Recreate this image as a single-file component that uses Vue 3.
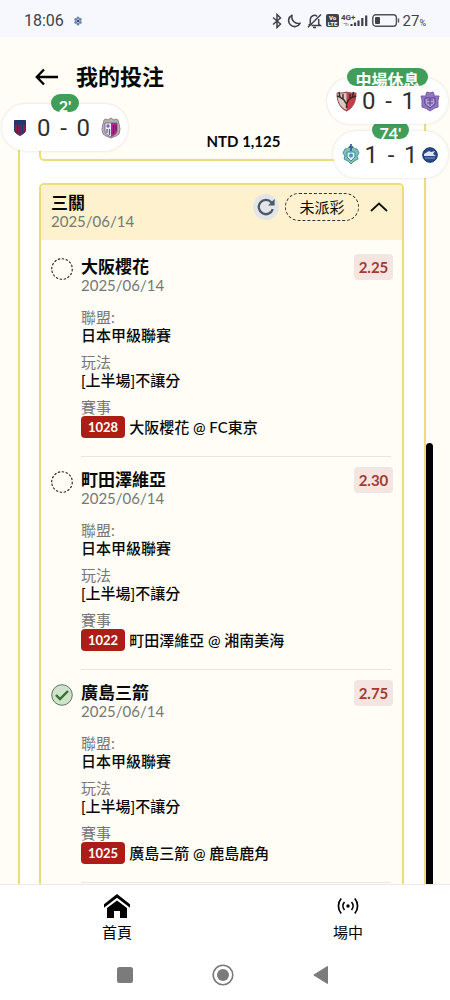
<script setup>
import { ref } from 'vue'

const open = ref(true)

const legs = [
  { pick: '大阪櫻花', date: '2025/06/14', odds: '2.25', code: '1028', match: '大阪櫻花 @ FC東京', won: false },
  { pick: '町田澤維亞', date: '2025/06/14', odds: '2.30', code: '1022', match: '町田澤維亞 @ 湘南美海', won: false },
  { pick: '廣島三箭', date: '2025/06/14', odds: '2.75', code: '1025', match: '廣島三箭 @ 鹿島鹿角', won: true },
]
</script>

<template>
  <div class="phone">
    <div class="status">
      <span class="clock">18:06</span>
      <svg class="flower" width="8" height="10" viewBox="0 0 8 10">
        <g fill="#6f87ad"><circle cx="4" cy="2" r="1.5" /><circle cx="4" cy="8" r="1.5" /><circle cx="1.7" cy="3.5" r="1.4" /><circle cx="6.3" cy="3.5" r="1.4" /><circle cx="1.7" cy="6.5" r="1.4" /><circle cx="6.3" cy="6.5" r="1.4" /></g>
        <circle cx="4" cy="5" r="1.3" fill="#34507f" />
      </svg>
      <div class="status-icons">
        <svg width="10" height="16" viewBox="0 0 10 16" fill="none" stroke="#40424a" stroke-width="1.5"><path d="M1 4.5 8.5 11 5 14.5V1.5L8.5 5 1 11.5" /></svg>
        <svg class="moon" width="14" height="14" viewBox="0 0 14 14" fill="none" stroke="#40424a" stroke-width="1.6" stroke-linejoin="round"><path d="M5 1.2A6 6 0 1 0 13 9.3 6.6 6.6 0 0 1 5 1.2Z" /></svg>
        <svg class="bell" width="15" height="16" viewBox="0 0 15 16" fill="none" stroke="#40424a" stroke-width="1.5"><path d="M3.3 10.8V6.5a4.2 4.2 0 0 1 6.8-3.2M11.7 6v5l1.6 1.5H4.5M1 14.3 14 1.5M6 14.6h3" /><path d="M1.6 12.4 3.3 11" /></svg>
        <svg class="volte" width="13" height="13" viewBox="0 0 13 13"><rect width="13" height="13" rx="2" fill="#40424a" /><text x="6.5" y="6" class="volte-text">Vo</text><text x="6.5" y="11.6" class="volte-text">LTE</text></svg>
        <svg class="signal" width="27" height="15" viewBox="0 0 27 15">
          <text x="0" y="6.5" class="net-text">4G+</text>
          <path d="M2.5 10.5h4M4 12h4" stroke="#9a9ca4" stroke-width="1" />
          <path d="M10.5 11v2M14 9.5V13M17.5 7.5V13M21.3 5V13M25.2 2.5V13" stroke="#40424a" stroke-width="2.2" />
        </svg>
        <svg class="battery" width="28" height="13" viewBox="0 0 28 13"><rect x=".8" y=".8" width="23.6" height="11.4" rx="3" fill="none" stroke="#50525a" stroke-width="1.4" /><rect x="3" y="3" width="5" height="7" rx="1" fill="#40424a" /><path d="M26.5 4.5v4" stroke="#50525a" stroke-width="1.4" /></svg>
        <span class="level">27<small>%</small></span>
      </div>
    </div>

    <header class="top">
      <button class="icon-btn" aria-label="返回">
        <svg width="24" height="18" viewBox="0 0 24 18" fill="none" stroke="#000" stroke-width="2.4"><path d="M23 9H2M9 1.500 1.800 9 9 16.500" /></svg>
      </button>
      <h1>我的投注</h1>
    </header>

    <main class="content">
      <div class="panel">
        <section class="card previous"><p class="amount">NTD 1,125</p></section>

        <section class="card">
          <div class="card-head">
            <div>
              <h2>三關</h2>
              <p class="date">2025/06/14</p>
            </div>
            <div class="tools">
              <button class="reload" aria-label="重新整理">
                <svg width="18" height="18" viewBox="0 0 18 18" fill="none" stroke="#4e5968" stroke-width="2.3"><path d="M15.8 11.2A7.2 7.2 0 1 1 14.5 4.4" /><path d="M17.6 1v6.6H11Z" fill="#4e5968" stroke="none" /></svg>
              </button>
              <span class="state">未派彩</span>
              <button class="icon-btn toggle" aria-label="收合" :aria-expanded="open" @click="open = !open">
                <svg width="18" height="10" viewBox="0 0 18 10" fill="none" stroke="#111" stroke-width="1.8"><path d="m1 9 8-7.500L17 9" /></svg>
              </button>
            </div>
          </div>

          <div v-if="open" class="legs">
            <article v-for="leg in legs" :key="leg.code" class="leg">
              <svg class="mark" width="22" height="22" viewBox="0 0 22 22" fill="none">
                <template v-if="leg.won">
                  <circle cx="11" cy="11" r="10.3" fill="#cfe3cc" stroke="#5f755f" stroke-width="1" />
                  <path d="m5 11 4 4 8-8" stroke="#35702f" stroke-width="2.4" />
                </template>
                <circle v-else cx="11" cy="11" r="10.3" stroke="#222" stroke-width="1.1" stroke-dasharray="2.4 1.6" />
              </svg>
              <div class="leg-body">
                <div class="leg-head">
                  <div class="leg-title">
                    <h3>{{ leg.pick }}</h3>
                    <p class="date">{{ leg.date }}</p>
                  </div>
                  <span class="odds">{{ leg.odds }}</span>
                </div>
                <dl>
                  <dt>聯盟:</dt>
                  <dd>日本甲級聯賽</dd>
                  <dt>玩法</dt>
                  <dd>[上半場]不讓分</dd>
                  <dt>賽事</dt>
                  <dd class="match"><span class="code">{{ leg.code }}</span>{{ leg.match }}</dd>
                </dl>
              </div>
            </article>
          </div>
        </section>
      </div>
      <div class="thumb"></div>
    </main>

    <nav class="tabs">
      <a href="#home">
        <svg width="28" height="26" viewBox="0 0 28 26"><path d="M14 1 1 11.3v3.500L14 4.800l13 10v-3.500Z" fill="#000" /><path d="M14 7.500 4 15v10h7v-7h6v7h7V15Z" fill="#000" /></svg>
        <span>首頁</span>
      </a>
      <a href="#live">
        <svg width="22" height="26" viewBox="0 0 22 26" fill="none" stroke="#000" stroke-width="1.7"><circle cx="11" cy="13" r="1.7" fill="#000" stroke="none" /><path d="M7.500 9a6 6 0 0 0 0 8M14.500 9a6 6 0 0 1 0 8M4.200 5.500a11.500 11.500 0 0 0 0 15M17.800 5.500a11.500 11.500 0 0 1 0 15" /></svg>
        <span>場中</span>
      </a>
    </nav>

    <div class="system">
      <button class="icon-btn" aria-label="最近"><svg width="16" height="16" viewBox="0 0 16 16"><rect width="16" height="16" rx="2.5" fill="#7b7b7b" /></svg></button>
      <button class="icon-btn" aria-label="主畫面"><svg width="22" height="22" viewBox="0 0 22 22"><circle cx="11" cy="11" r="9.8" fill="none" stroke="#7b7b7b" stroke-width="1.6" /><circle cx="11" cy="11" r="6" fill="#7b7b7b" /></svg></button>
      <button class="icon-btn" aria-label="上一頁"><svg width="16" height="18" viewBox="0 0 16 18"><path d="M14.5.5v17L.8 9Z" fill="#7b7b7b" stroke="#7b7b7b" stroke-linejoin="round" /></svg></button>
    </div>

    <div class="float kobe">
      <span class="tag-row"><span class="tag">2'</span></span>
      <svg width="12" height="16" viewBox="0 0 12 16"><path d="M.5.5h11v9.500c0 2.500-2.500 4-5.500 5.500C3 14 .5 12.500.5 10Z" fill="#8b1c48" stroke="#26306f" /><path d="M1 1h10v4H1Z" fill="#28346f" /><path d="M3.500 5v8M6 5v9M8.500 5v8" stroke="#25346f" stroke-width="1" /></svg>
      <b class="score"><i>0</i><i>-</i><i>0</i></b>
      <svg width="20" height="22" viewBox="0 0 20 22"><path d="m3 3 2-1 2 1 3-2 3 2 2-1 2 1 1 4 1 5-1 5-3 2-5 2-5-2-3-2-1-5 1-5Z" fill="#b9b1a9" stroke="#93858c" /><path d="M4 6h12v8c0 3-3 4-6 6-3-2-6-3-6-6Z" fill="#f3edf6" stroke="#574d85" stroke-width=".7" /><path d="M10 6h6v8c0 3-3 4-6 6Z" fill="#b1278c" /><path d="M6 12v4M8.500 12v6" stroke="#5767b0" stroke-width="1.400" /><path d="M12.500 8v9M15 8v6" stroke="#51286f" stroke-width="1.200" /><circle cx="7" cy="9" r="1.700" fill="#7767b4" /></svg>
    </div>

    <div class="float hiroshima">
      <span class="tag-row"><span class="tag">中場休息</span></span>
      <svg width="21" height="22" viewBox="0 0 21 22"><path d="M1 3c3 0 6 0 9.500-1C14 3 17 3 20 3c0 9-3 15-9.500 18C4 18 1 12 1 3Z" fill="#c93b45" stroke="#8a5552" /><path d="M1.500 3.500c3 0 6 0 9-.500v17C4 17 1.500 11 1.500 3.500Z" fill="#d5cbc3" /><path d="m3 2 1 5 4 3 2.500 4 2-4 4-3 1-5M4 7 1 6m6 3 0-5m7 5 0-5m3 3 3-1M10.500 13v5" stroke="#3b2526" stroke-width="1.400" fill="none" /></svg>
      <b class="score"><i>0</i><i>-</i><i>1</i></b>
      <svg width="20" height="21" viewBox="0 0 20 21"><path d="m6 3 1-2 3 1 3-1 1 2v2h5l-1 4v7l-3 1-2 1-3 2-3-2-2-1-3-1V9L1 5h5Z" fill="#9276c3" stroke="#765ba5" /><path d="M5 7h10v6l-5 4-5-4Z" fill="#b6a1d8" stroke="#563e84" /><path d="M7 9h6M10 7v8M7 12h6" stroke="#5c438f" /></svg>
    </div>

    <div class="float shonan">
      <span class="tag-row"><span class="tag">74'</span></span>
      <svg width="18" height="21" viewBox="0 0 18 21"><path d="M3 5c2 0 3-1 4-2h4c1 1 2 2 4 2l2 4-2 3 1 3-4 2-3 3-3-3-4-2 1-3-2-3Z" fill="#83c1b4" stroke="#469492" /><path d="M9 0v7M7 3h4" stroke="#3466a0" stroke-width="1.800" /><path d="M5 8h8v5l-4 4-4-4Z" fill="#dceff1" stroke="#34889e" /><circle cx="9" cy="11.500" r="2" fill="#4b91be" /></svg>
      <b class="score"><i>1</i><i>-</i><i>1</i></b>
      <svg width="16" height="16" viewBox="0 0 16 16"><circle cx="8" cy="8" r="7.300" fill="#29488d" stroke="#172f62" /><path d="M2 7 7 4l2 1 4-1-2 3 3 2H2Z" fill="#dde6ef" /><path d="M3 11h10" stroke="#6b91bf" stroke-width="1.200" /></svg>
    </div>
  </div>
</template>

<style>
body { margin: 0; }
</style>

<style scoped>
* { box-sizing: border-box; }
.phone {
  position: relative;
  display: flex;
  flex-direction: column;
  height: 100vh;
  overflow: hidden;
  background: #fffdf5;
  color: #080808;
  font-family: Lato, "Noto Sans CJK TC", sans-serif;
  font-size: 15px;
}
h1, h2, h3, p, dl, dd { margin: 0; }
svg { display: block; flex: none; }
button { padding: 0; border: 0; background: none; color: inherit; font: inherit; cursor: pointer; }
.icon-btn { display: flex; align-items: center; justify-content: center; }

.status {
  display: flex;
  align-items: center;
  flex: none;
  height: 37px;
  padding: 4px 24px 0;
  background: #f6f8fd;
  color: #40424a;
  font-family: Roboto, sans-serif;
}
.clock { font-size: 16px; }
.flower { margin-left: 10px; }
.status-icons { display: flex; align-items: center; margin-left: auto; }
.moon { margin-left: 5px; }
.bell { margin-left: 6px; }
.volte { margin-left: 4px; }
.signal { margin-left: 2px; }
.battery { margin-left: 4px; }
.level { margin-left: 3px; font-size: 15px; }
.level small { font-size: 9px; }
.volte-text { fill: #fff; font: bold 6px Roboto, sans-serif; text-anchor: middle; }
.net-text { fill: #40424a; font: bold 8px Roboto, sans-serif; }

.top { display: flex; align-items: center; flex: none; gap: 17px; height: 80px; padding-left: 35px; }
h1 { font-size: 22px; font-weight: 700; line-height: 32px; }

.content { position: relative; flex: 1; min-height: 0; overflow: hidden; padding: 0 24px 0 18px; }
.panel { padding: 0 20px 0 19px; border: solid #ecdc7a; border-width: 0 2px; background: #fff; }
.card { margin-bottom: 22px; overflow: hidden; border: 2px solid #ecdc7a; border-radius: 5px; background: #fffdf5; }
.previous { padding: 14px 0 8px; border-top: 0; border-radius: 0 0 5px 5px; }
.amount { padding-left: 44px; font-weight: 700; line-height: 20px; text-align: center; }
.card-head { display: flex; justify-content: space-between; padding: 8px 9px 10px 10px; background: #fdf2cd; }
h2, h3 { font-size: 17px; font-weight: 700; line-height: 20px; }
.date { color: #777; font-size: 15px; line-height: 17px; }
.tools { display: flex; align-items: center; align-self: flex-start; gap: 6px; }
.reload { display: grid; place-items: center; width: 26px; height: 26px; border-radius: 50%; background: #e3e5e8; }
.state { width: 74px; border: 1px dashed #333; border-radius: 15px; line-height: 26px; text-align: center; }
.toggle { width: 28px; height: 28px; }

.legs { padding: 4px 11px 24px 10px; }
.leg { display: flex; gap: 8px; }
.mark { margin-top: 14px; }
.leg-body { flex: 1; padding: 10px 0 18px; border-bottom: 1px solid #e7e5dd; }
.leg-head { display: flex; align-items: flex-start; justify-content: space-between; margin-bottom: 14px; }
.leg-title { padding-top: 3px; }
.odds { min-width: 39px; margin-right: -2px; border-radius: 4px; background: #f5e5e0; color: #a23b32; font-weight: 700; line-height: 26px; text-align: center; }
dt { color: #777; line-height: 18px; }
dd { margin-bottom: 9px; font-weight: 500; line-height: 18px; }
.match { display: flex; align-items: center; gap: 4px; margin-bottom: 0; line-height: 22px; }
.code { padding: 0 7px; border-radius: 4px; background: #ad1d18; color: #fff; font-size: 13px; font-weight: 700; }
.thumb { position: absolute; top: 326px; right: 17px; bottom: 0; width: 7px; border-radius: 4px 4px 0 0; background: #000; }

.tabs { display: flex; justify-content: space-between; flex: none; height: 66px; padding: 8px 87px 0 102px; border-top: 1px solid #e9e9e7; background: #fff; }
.tabs a { display: flex; flex-direction: column; align-items: center; gap: 2px; color: #000; line-height: 22px; text-decoration: none; }
.system { display: flex; align-items: center; justify-content: space-between; flex: none; height: 50px; padding: 0 121px 0 117px; background: #fff; }

.float {
  position: absolute;
  display: flex;
  align-items: center;
  justify-content: space-between;
  height: 47px;
  border-radius: 24px;
  background: #fff;
  box-shadow: 0 0 3px rgba(0, 0, 0, 0.14);
}
.kobe { top: 104px; left: 2px; width: 126px; padding: 0 7px 0 12px; }
.hiroshima { top: 78px; right: 2px; z-index: 2; width: 121px; height: 46px; padding: 0 8px 0 9px; }
.shonan { top: 131px; right: 2px; width: 115px; padding: 0 10px 0 9px; }
.tag-row { position: absolute; top: -10px; left: 0; display: flex; justify-content: center; width: 100%; }
.tag { height: 18px; padding: 0 8px; overflow: hidden; border-radius: 9px; background: #419d5a; color: #fff; font-size: 16px; font-weight: 700; line-height: 23px; }
.score { display: flex; gap: 8px; color: #303030; font: 400 24px Roboto, sans-serif; }
.score i { font-style: normal; }
.score i:nth-child(2) { width: 10px; text-align: center; }
</style>
